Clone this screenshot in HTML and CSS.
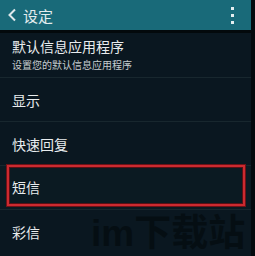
FILE: index.html
```html
<!DOCTYPE html>
<html lang="zh-CN">
<head>
<meta charset="utf-8">
<link rel="stylesheet" href="styles.css">
</head>
<body>
<div class="screen">
  <header class="appbar">
    <svg class="back" width="10" height="14" viewBox="0 0 10 14"><polyline points="8,1.5 2.5,7 8,12.5" fill="none" stroke="#dfe9ec" stroke-width="2"/></svg>
    <span class="title">设定</span>
    <span class="spacer"></span>
    <span class="more"><i></i><i></i><i></i></span>
  </header>
  <ul class="list">
    <li class="row two">
      <span class="main">默认信息应用程序</span>
      <span class="sub">设置您的默认信息应用程序</span>
    </li>
    <li class="row"><span class="main">显示</span></li>
    <li class="row"><span class="main">快速回复</span></li>
    <li class="row marked"><span class="main">短信</span></li>
    <li class="row last"><span class="main">彩信</span></li>
  </ul>
  <div class="watermark">im下载站</div>
</div>
</body>
</html>
```
FILE: styles.css
```css
html, body {
  margin: 0;
  padding: 0;
  background: #0a1720;
}
body {
  width: 255px;
  height: 256px;
  overflow: hidden;
  font-family: "Noto Sans CJK SC", "Noto Sans", sans-serif;
  color: #e6eaec;
}
.screen {
  position: relative;
  width: 255px;
  height: 256px;
  overflow: hidden;
  border-right: 4px solid #040a0e;
  box-sizing: border-box;
}
.appbar {
  height: 30px;
  background: #196a79;
  border-bottom: 3px solid #03090c;
  display: flex;
  align-items: center;
  padding: 0 0 0 7px;
}
.back {
  display: block;
  margin-right: 6px;
}
.title {
  font-size: 15px;
  line-height: 15px;
  color: #e2ecee;
}
.spacer { flex: 1; }
.more {
  display: flex;
  flex-direction: column;
  gap: 4px;
  width: 3px;
  margin-right: 17px;
}
.more i {
  display: block;
  width: 3px;
  height: 3px;
  background: #e5eef0;
}
.list {
  list-style: none;
  margin: 0;
  padding: 0;
}
.row {
  height: 43px;
  border-bottom: 1px solid #18272e;
  display: flex;
  flex-direction: column;
  justify-content: center;
  padding-left: 12px;
  position: relative;
}
.row.two {
  justify-content: flex-start;
  padding-top: 4px;
  box-sizing: border-box;
  height: 45px;
}
.main {
  font-size: 14px;
  line-height: 18px;
  color: #e8ecee;
}
.sub {
  font-size: 10px;
  line-height: 14px;
  margin-top: 3px;
  color: #c6cdd0;
}
.row.marked {
  background: #0b1a22;
}
.row.marked .main {
  margin-top: -2px;
}
.row.marked::after {
  content: "";
  position: absolute;
  left: 7px;
  right: 6px;
  top: -1px;
  bottom: 3px;
  border: 2px solid #cc2a30;
  box-shadow: 0 0 0 1px #6e1217, inset 0 0 0 1px #5a1015;
}
.row.last {
  border-bottom: none;
}
.watermark {
  position: absolute;
  left: 91px;
  top: 213px;
  font-size: 37px;
  line-height: 42px;
  font-weight: 700;
  font-family: "Liberation Sans", "Noto Sans CJK SC", sans-serif;
  color: #050e13;
  white-space: nowrap;
  letter-spacing: 0;
}
```
